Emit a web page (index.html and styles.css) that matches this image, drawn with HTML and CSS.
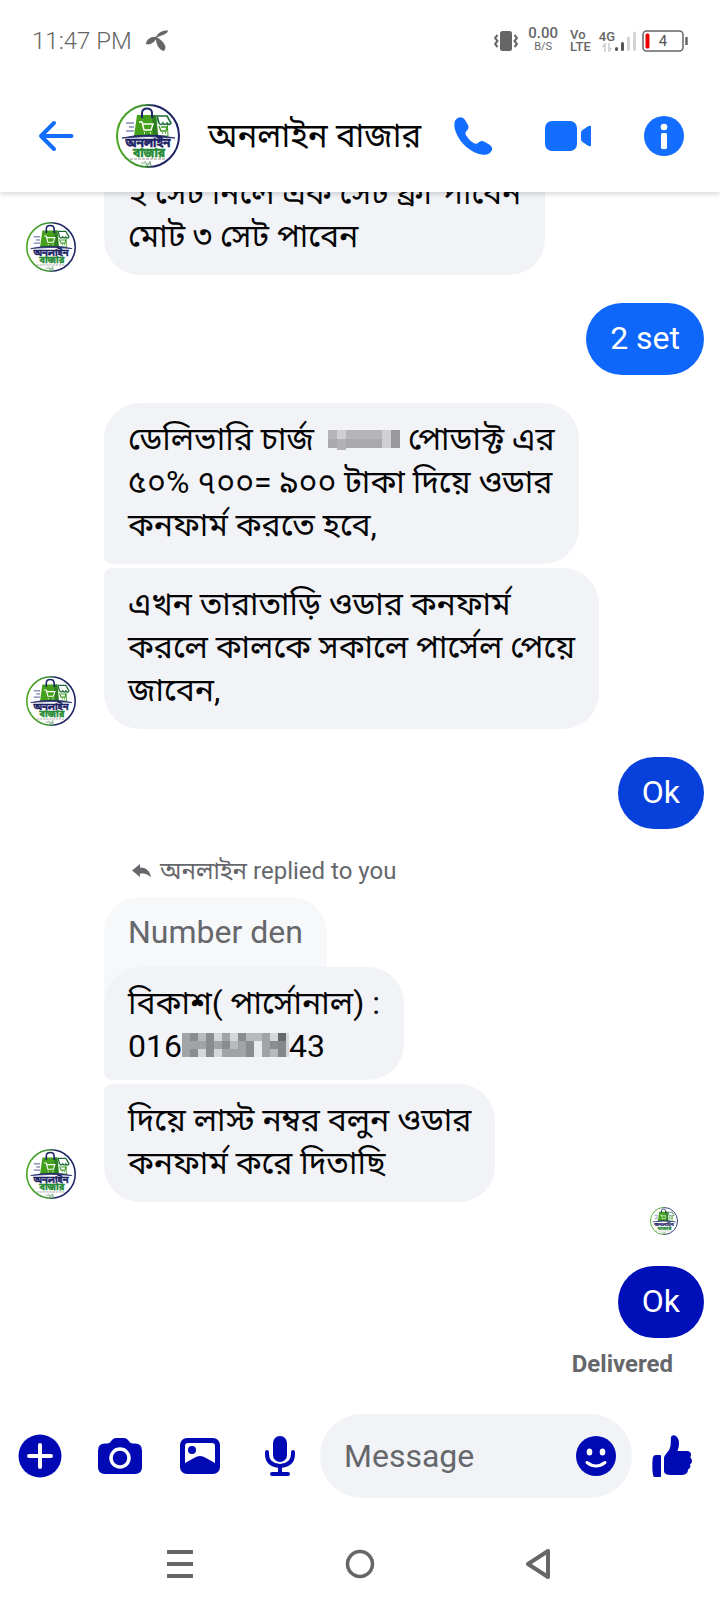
FILE: index.html
```html
<!DOCTYPE html>
<html lang="bn">
<head>
<meta charset="utf-8">
<meta name="viewport" content="width=device-width, initial-scale=1">
<title>অনলাইন বাজার</title>
<link rel="stylesheet" href="styles.css">
</head>
<body>
<svg class="defs" aria-hidden="true">
  <defs>
    <linearGradient id="ring" x1="0" y1="0" x2="1" y2="0">
      <stop offset="0" stop-color="#4aa51f"/><stop offset=".45" stop-color="#3f8f3a"/><stop offset=".6" stop-color="#1d2466"/><stop offset="1" stop-color="#1d2466"/>
    </linearGradient>
    <symbol id="logo" viewBox="0 0 64 64">
      <circle cx="32" cy="32" r="31" fill="#fff" stroke="url(#ring)" stroke-width="2"/>
      <path d="M41 15h10l1 17H40z" fill="#fff" stroke="#3d9c20" stroke-width="1"/>
      <path d="M41 12h10l4 7c-2 3-3 1-4 0-1 2-3 2-4 0-1 2-3 2-4 0z" fill="#fff" stroke="#1d6b3a" stroke-width="1.6"/>
      <path d="M43 22l2 5h5l1-4h-6M46 29h1M49 29h1" fill="none" stroke="#3d9c20" stroke-width="1.4"/>
      <path d="M21 11h19l2 21H18z" fill="#45a11b"/>
      <path d="M36 11h4l2 21h-5z" fill="#2d7d22"/>
      <path d="M26 14V9c0-6 10-6 10 0v5" fill="none" stroke="#1d2466" stroke-width="2"/>
      <path d="M23 18h3l2 8h7l2-6H27M28 29h1M34 29h1" fill="none" stroke="#fff" stroke-width="1.4"/>
      <path d="M10 19h8M13 23h5M10 27h8" stroke="#4b5390" stroke-width="1.2"/>
      <path d="M6 34Q32 28 59 34Q32 31 6 34z" fill="#1d2466" stroke="#1d2466" stroke-width=".8"/>
      <text class="logo-text" x="32" y="43" text-anchor="middle" fill="#1d2466" stroke="#1d2466">অনলাইন</text>
      <text class="logo-text" x="33" y="53" text-anchor="middle" fill="#278a36" stroke="#278a36">বাজার</text>
      <path d="M14 55h36" stroke="#777" stroke-width=".8" stroke-dasharray="3 1"/>
      <path d="M25 59h4M29 57l2 5 3-5 1 5M30 60h5" fill="none" stroke="#7eaa86" stroke-width="1"/>
    </symbol>
  </defs>
</svg>

<div class="screen">
  <div class="status">
    <span class="clock">11:47 PM</span>
    <svg class="carrier" viewBox="0 0 22 22"><g fill="#666"><path d="M9.500 8C12 2 17 0 22 .5 22 4 16 5 9.500 8z"/><path d="M11 7C5 6 0 10 0 14c3 1.500 9-1 11-7z"/><path d="M10 7C9.500 14 13 20 18 21c4-4-1-11-8-14z"/></g></svg>
    <span class="spacer"></span>
    <svg class="vibrate" viewBox="0 0 24 20"><rect x="6" width="12" height="20" rx="2.500" fill="#666"/><path d="M3.500 4L1 7l2.500 3L1 13l2.500 3M20.500 4L23 7l-2.500 3 2.500 3-2.500 3" fill="none" stroke="#666" stroke-width="2"/></svg>
    <span class="stack speed"><b>0.00</b><i>B/S</i></span>
    <span class="stack volte"><b>Vo</b><b>LTE</b></span>
    <span class="signal">
      <span class="stack net"><b>4G</b><svg viewBox="0 0 10 9"><path d="M3 9V1L.5 4M7 0v8l2.500-3" fill="none" stroke="#ccc" stroke-width="1.500"/></svg></span>
      <svg class="bars" viewBox="0 0 22 22"><g stroke-width="3" stroke-linecap="round"><path d="M2.500 18.500v1M8.500 13.500v6" stroke="#555"/><path d="M14.500 8v11.500M20.500 3v16.500" stroke="#d4d4d4"/></g></svg>
    </span>
    <svg class="battery" viewBox="0 0 46 22"><rect x="1" y="1" width="40" height="20" rx="3.500" fill="none" stroke="#666" stroke-width="1.500"/><rect x="3.500" y="3.500" width="4" height="15" rx="1.500" fill="#e00"/><path d="M44.500 7v8" stroke="#666" stroke-width="2.500"/><text x="21" y="16" text-anchor="middle" font-size="15" fill="#555">4</text></svg>
  </div>

  <header class="header">
    <button class="back" aria-label="Back"><svg viewBox="0 0 36 32"><path d="M33.500 16H3M16 3L3 16l13 13" fill="none" stroke="currentColor" stroke-width="4" stroke-linecap="round" stroke-linejoin="round"/></svg></button>
    <svg class="logo-lg"><use href="#logo"/></svg>
    <h1 class="title">অনলাইন বাজার</h1>
    <div class="calls">
      <button aria-label="Audio call"><svg class="i-phone" viewBox="0 0 38 38"><path d="M3 1.500C6-.5 9 0 11 3l3 5c1 2 .5 4-1 5.500-2 2-2 3.500-.5 5.500 2 3 4 5 7 7 2 1.300 3.500 1 5-.5 2-2 4-2 6-.8l5 3c3 2 3.500 5 1 7.500-4 4-11 3-18-1C9 29 3 20 .8 12 0 7.500 0 3.500 3 1.500z" fill="currentColor"/></svg></button>
      <button aria-label="Video call"><svg class="i-video" viewBox="0 0 46 30"><rect width="32" height="30" rx="7" fill="currentColor"/><path d="M36 12q0-2 1.500-3l6-4q2.500-1 2.500 1v18q0 2-2.500 1l-6-4Q36 20 36 18z" fill="currentColor"/></svg></button>
      <button aria-label="Conversation information"><svg class="i-info" viewBox="0 0 40 40"><circle cx="20" cy="20" r="20" fill="currentColor"/><circle cx="20" cy="11" r="3.300" fill="#fff"/><rect x="17" y="17" width="6" height="16" rx="1.500" fill="#fff"/></svg></button>
    </div>
  </header>

  <main class="thread">
    <div class="group first">
      <svg class="logo-md"><use href="#logo"/></svg>
      <div class="bubbles"><p class="bubble last">২ সেট নিলে এক সেট ফ্রী পাবেন<br>মোট ৩ সেট পাবেন</p></div>
    </div>

    <p class="bubble mine tone-1">2 set</p>

    <div class="group">
      <svg class="logo-md"><use href="#logo"/></svg>
      <div class="bubbles">
        <p class="bubble top">ডেলিভারি চার্জ <svg class="mask mask-a" viewBox="0 0 72 20" shape-rendering="crispEdges"><path fill="#b5b5b7" d="M0 0h72v18H0z"/><path fill="#aaaaac" d="M0 9h9v9H0zM18 9h36v9H18z"/><path fill="#d0d0d2" d="M9 0h9v9H9zM54 0h9v18h-9z"/><path fill="#b2b2b4" d="M9 9h9v11H9z"/><path fill="#9a9a9c" d="M63 0h9v18h-9z"/></svg> পোডাক্ট এর<br>৫০% ৭০০= ৯০০ টাকা দিয়ে ওডার<br>কনফার্ম করতে হবে,</p>
        <p class="bubble last">এখন তারাতাড়ি ওডার কনফার্ম<br>করলে কালকে সকালে পার্সেল পেয়ে<br>জাবেন,</p>
      </div>
    </div>

    <p class="bubble mine tone-2">Ok</p>

    <p class="reply-note"><svg viewBox="0 0 19 14"><path d="M8 0v3.500c6 0 10 3 11 10C16 10 13 9.500 8 9.500V13L0 6.500z" fill="currentColor"/></svg>অনলাইন replied to you</p>
    <div class="group replied">
      <svg class="logo-md"><use href="#logo"/></svg>
      <div class="bubbles">
        <p class="bubble quoted">Number den</p>
        <p class="bubble top answer">বিকাশ( পার্সোনাল) :<br>016<svg class="mask mask-b" viewBox="0 0 107 24" shape-rendering="crispEdges"><path fill="#a2a3a5" d="M0 0h107v24H0z"/><path fill="#8b8c8e" d="M8 0h8v8H8zM8 16h8v8H8zM24 0h8v24h-8zM40 8h8v8h-8zM56 0h8v8h-8zM64 8h8v16h-8zM88 8h8v8h-8z"/><path fill="#b9babd" d="M16 0h8v8h-8zM48 8h8v8h-8zM64 0h8v8h-8zM72 0h8v8h-8zM88 16h8v8h-8z"/><path fill="#d6d7db" d="M16 16h8v8h-8zM32 0h8v8h-8zM32 16h8v8h-8zM48 0h8v8h-8zM88 0h8v8h-8zM104 0h3v24h-3z"/><path fill="#e9eaee" d="M72 8h8v16h-8z"/><path fill="#68696c" d="M96 0h8v8h-8z"/><path fill="#86878a" d="M96 8h8v16h-8z"/></svg>43</p>
        <p class="bubble last">দিয়ে লাস্ট নম্বর বলুন ওডার<br>কনফার্ম করে দিতাছি</p>
      </div>
    </div>

    <svg class="logo-sm"><use href="#logo"/></svg>
    <p class="bubble mine tone-3">Ok</p>
    <p class="delivered">Delivered</p>
  </main>

  <form class="composer">
    <button type="button" aria-label="More"><svg viewBox="0 0 44 44"><circle cx="22" cy="22" r="21.500" fill="currentColor"/><path d="M22 11v22M11 22h22" stroke="#fff" stroke-width="4" stroke-linecap="round"/></svg></button>
    <button type="button" aria-label="Camera"><svg viewBox="0 0 44 44"><path d="M14 6q1.500-2 4-2h8q2.500 0 4 2l2 2.500q1 1 3 1h2q7 0 7 7V33q0 7-7 7H7q-7 0-7-7V16.500q0-7 7-7h2q2 0 3-1z" fill="currentColor"/><circle cx="22" cy="24" r="9" fill="currentColor" stroke="#fff" stroke-width="3.500"/></svg></button>
    <button type="button" aria-label="Photos"><svg viewBox="0 0 44 44"><rect x="2" y="4" width="40" height="36" rx="7" fill="currentColor"/><path d="M10 9h24q3 0 3 3v17l-9-5q-6-4-12 0l-9 5V12q0-3 3-3z" fill="#fff"/><circle cx="14" cy="16" r="4" fill="currentColor"/></svg></button>
    <button type="button" aria-label="Record voice"><svg viewBox="0 0 44 44"><rect x="15" y="2" width="14" height="26" rx="7" fill="currentColor"/><path d="M9 18v2q0 11 13 12 13-1 13-12v-2M22 32v8M14 40h16" fill="none" stroke="currentColor" stroke-width="4" stroke-linecap="round"/></svg></button>
    <div class="field">
      <input type="text" placeholder="Message" aria-label="Message">
      <button type="button" aria-label="Emoji"><svg viewBox="0 0 40 40"><circle cx="20" cy="20" r="20" fill="currentColor"/><ellipse cx="13.500" cy="16" rx="2.800" ry="3.600" fill="#fff"/><ellipse cx="26.500" cy="16" rx="2.800" ry="3.600" fill="#fff"/><path d="M11 26.500q9 7 18 0" fill="none" stroke="#fff" stroke-width="3" stroke-linecap="round"/></svg></button>
    </div>
    <button type="button" aria-label="Like"><svg class="thumb" viewBox="0 0 40 42"><path d="M4 20h4q1 0 1 1v20q0 1-1 1H2.500Q1 42 .5 36 0 27 1 22q.7-2 3-2z" fill="currentColor"/><path d="M19 2q1-2.500 4-1.500 4 2 4 8 0 4-1.500 7.500H35q4 0 4 3.500 0 2-.8 2.800Q40 24 40 26q0 2.500-2 3.500.8 1.500 0 3-.7 1.500-2 2 .2 5-6 5.500H19q-7 0-7-4V23q0-2 2-4 4-4 4.500-8 .5-6 .5-9z" fill="currentColor"/></svg></button>
  </form>

  <nav class="navbar">
    <button aria-label="Recent apps"><svg viewBox="0 0 30 30"><path d="M2 3h26M2 15h26M2 27h26" stroke="currentColor" stroke-width="4"/></svg></button>
    <button aria-label="Home"><svg viewBox="0 0 30 30"><circle cx="15" cy="15" r="12.500" fill="none" stroke="currentColor" stroke-width="3.500"/></svg></button>
    <button aria-label="Back"><svg viewBox="0 0 30 30"><path d="M23 2v26L3 15z" fill="none" stroke="currentColor" stroke-width="4" stroke-linejoin="round"/></svg></button>
  </nav>
</div>
</body>
</html>
```
FILE: styles.css
```css
* { box-sizing: border-box; }
body { margin: 0; background: #fff; color: #050505; font-family: Roboto, "Noto Sans", "Noto Sans Bengali", sans-serif; }
p, h1 { margin: 0; }
svg { display: block; flex: none; }
button { display: grid; place-items: center; padding: 0; border: 0; background: none; color: inherit; }
.defs { position: absolute; width: 0; height: 0; }
.logo-text { font-size: 12px; font-weight: 700; stroke-width: 0.5; }

.screen { display: flex; flex-direction: column; min-height: 100vh; }

.status { position: relative; z-index: 2; display: flex; align-items: center; height: 80px; padding: 2px 32px 0; background: #fff; color: #666; }
.clock { font-size: 24px; font-weight: 300; }
.carrier { width: 22px; height: 22px; margin-left: 14px; }
.spacer { flex: 1; }
.stack { display: flex; flex-direction: column; align-items: center; line-height: 12px; font-size: 13px; }
.stack b { font-weight: 500; }
.stack i { font-style: normal; font-size: 11px; }
.vibrate { width: 24px; height: 20px; margin-right: 10px; }
.speed { margin: 0 12px 4px 0; }
.speed b { font-size: 15px; line-height: 16px; }
.volte { align-items: flex-start; margin-right: 8px; }
.signal { display: flex; align-items: flex-end; margin-right: 6px; }
.net svg { width: 10px; height: 9px; }
.bars { width: 22px; height: 22px; margin-left: -1px; }
.battery { width: 46px; height: 22px; }

.header { position: relative; z-index: 1; display: flex; align-items: center; height: 112px; padding: 0 36px 0 38px; background: #fff; box-shadow: 0 2px 5px rgba(0, 0, 0, .16); }
.header button { color: #136dff; }
.back svg { width: 36px; height: 32px; }
.logo-lg { width: 64px; height: 64px; margin-left: 42px; }
.title { flex: 1; margin-left: 28px; font-size: 33px; font-weight: 400; line-height: 44px; white-space: nowrap; }
.calls { display: flex; align-items: center; gap: 53px; }
.i-phone { width: 38px; height: 38px; }
.i-video { width: 46px; height: 30px; }
.i-info { width: 40px; height: 40px; }

.thread { display: flex; flex: 1; flex-direction: column; padding: 0 16px 0 26px; overflow: hidden; }
.group { display: flex; align-items: flex-end; gap: 28px; margin: 28px 0; }
.first { margin-top: -35px; }
.bubbles { display: flex; flex: 1; flex-direction: column; align-items: flex-start; gap: 4px; }
.logo-md { width: 50px; height: 50px; margin-bottom: 3px; }
.bubble { padding: 15px 24px 17px; border-radius: 36px; background: #f2f3f7; font-size: 32px; line-height: 43px; white-space: nowrap; }
.top { border-bottom-left-radius: 8px; }
.last { border-top-left-radius: 8px; }
.mine { align-self: flex-end; color: #fff; line-height: 40px; }
.tone-1 { background: #0f66fb; }
.tone-2 { background: #0840dc; }
.tone-3 { background: #0010b8; }
.mask { display: inline-block; vertical-align: baseline; }
.mask-a { width: 72px; height: 20px; margin-left: 6px; }
.mask-b { width: 107px; height: 24px; }
.reply-note { display: flex; align-items: center; gap: 9px; margin: 28px 0 0 106px; color: #65676b; font-size: 24px; line-height: 28px; }
.reply-note svg { width: 19px; height: 14px; }
.replied { margin: 12px 0 0; }
.quoted { margin-bottom: -40px; padding-bottom: 51px; border-radius: 36px 36px 0 0; background: #f7f8fa; color: #65676b; line-height: 40px; }
.answer { padding-bottom: 12px; }
.logo-sm { align-self: flex-end; width: 28px; height: 28px; margin: 5px 26px 31px 0; }
.delivered { align-self: flex-end; margin: 12px 31px 0 0; color: #65676b; font-size: 24px; font-weight: 700; line-height: 28px; }

.composer { display: flex; align-items: center; gap: 36px; height: 84px; padding: 0 28px 0 18px; color: #0009b4; }
.composer > button svg { width: 44px; height: 44px; }
.composer > button .thumb { width: 40px; height: 42px; }
.field { display: flex; flex: 1; align-items: center; min-width: 0; height: 84px; margin: 0 -16px 0 -18px; padding: 0 16px 0 24px; border-radius: 42px; background: #f2f3f7; }
.field input { flex: 1; min-width: 0; padding: 0; border: 0; outline: 0; background: none; color: #050505; font: 32px/40px Roboto, "Noto Sans", sans-serif; }
.field input::placeholder { color: #65676b; opacity: 1; }
.field svg { width: 40px; height: 40px; }

.navbar { display: flex; align-items: center; justify-content: center; gap: 150px; height: 114px; padding-top: 18px; color: #666; }
.navbar svg { width: 30px; height: 30px; }
```
